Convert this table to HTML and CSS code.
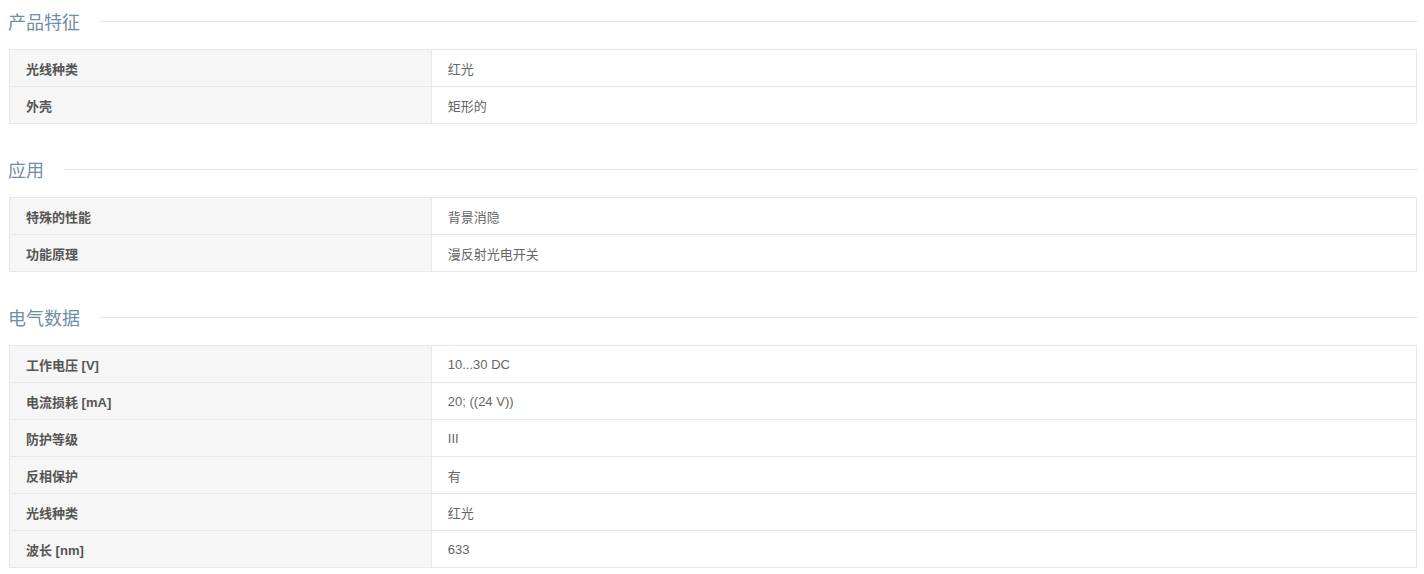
FILE: index.html
```html
<!DOCTYPE html>
<html lang="zh-CN">
<head>
  <meta charset="UTF-8">
  <title>产品参数</title>
  <link rel="stylesheet" href="styles.css">
</head>
<body>

  <div class="section">
    <h3 class="section-title"><span>产品特征</span></h3>
    <table class="spec-table">
      <tr><th>光线种类</th><td>红光</td></tr>
      <tr><th>外壳</th><td>矩形的</td></tr>
    </table>
  </div>

  <div class="section">
    <h3 class="section-title"><span>应用</span></h3>
    <table class="spec-table">
      <tr><th>特殊的性能</th><td>背景消隐</td></tr>
      <tr><th>功能原理</th><td>漫反射光电开关</td></tr>
    </table>
  </div>

  <div class="section">
    <h3 class="section-title"><span>电气数据</span></h3>
    <table class="spec-table">
      <tr><th>工作电压 [V]</th><td>10...30 DC</td></tr>
      <tr><th>电流损耗 [mA]</th><td>20; ((24 V))</td></tr>
      <tr><th>防护等级</th><td>III</td></tr>
      <tr><th>反相保护</th><td>有</td></tr>
      <tr><th>光线种类</th><td>红光</td></tr>
      <tr><th>波长 [nm]</th><td>633</td></tr>
    </table>
  </div>

</body>
</html>
```

FILE: styles.css
```css
body {
  margin: 8px 7px 0 8px;
  background: #fff;
  font-family: "Liberation Sans", Arial, "Noto Sans CJK SC", sans-serif;
  color: #666;
}
.section {
  margin-bottom: 32px;
}
.section-title {
  display: flex;
  align-items: center;
  height: 26px;
  margin: 0 0 15px;
  font-size: 18px;
  font-weight: normal;
  color: #6f8ea6;
}
.section-title span {
  padding-right: 20px;
}
.section-title::after {
  content: "";
  flex: 1;
  height: 1px;
  background: #e5e5e5;
}
.spec-table {
  width: calc(100% - 1px);
  margin-left: 1px;
  border-collapse: separate;
  border-spacing: 0;
  border: 1px solid #e8e8e8;
  border-bottom: none;
  font-size: 13px;
}
.spec-table th,
.spec-table td {
  height: 36px;
  padding: 0 17px 0 16px;
  border-bottom: 1px solid #e8e8e8;
  text-align: left;
  vertical-align: middle;
}
.spec-table th {
  width: 30%;
  background: #f6f6f6;
  color: #555;
  font-weight: bold;
  border-right: 1px solid #e8e8e8;
}
.spec-table td {
  color: #666;
}
```
